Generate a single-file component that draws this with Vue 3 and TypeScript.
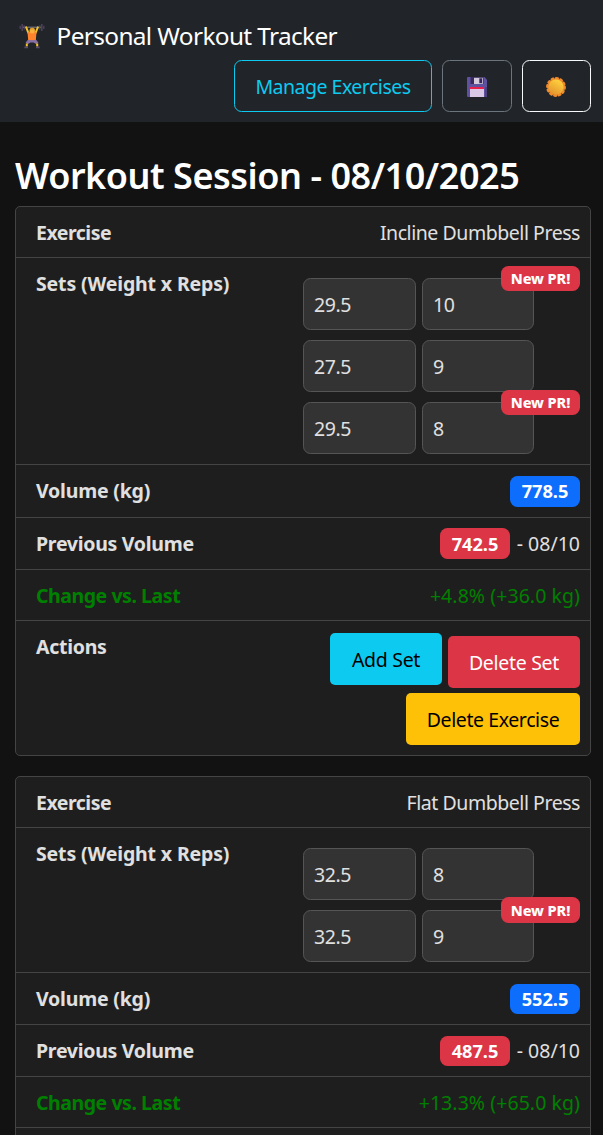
<script setup lang="ts">
interface WorkoutSet { weight: string; reps: string; pr: boolean }
interface Exercise {
  name: string
  kind: string
  sets: WorkoutSet[]
  volume: string
  previous: string
  date: string
  change: string
  editable: boolean
}

const exercises: Exercise[] = [
  {
    name: 'Incline Dumbbell Press',
    kind: 'incline',
    sets: [
      { weight: '29.5', reps: '10', pr: true },
      { weight: '27.5', reps: '9', pr: false },
      { weight: '29.5', reps: '8', pr: true },
    ],
    volume: '778.5',
    previous: '742.5',
    date: '08/10',
    change: '+4.8% (+36.0 kg)',
    editable: true,
  },
  {
    name: 'Flat Dumbbell Press',
    kind: 'flat',
    sets: [
      { weight: '32.5', reps: '8', pr: false },
      { weight: '32.5', reps: '9', pr: true },
    ],
    volume: '552.5',
    previous: '487.5',
    date: '08/10',
    change: '+13.3% (+65.0 kg)',
    editable: false,
  },
]
</script>

<template>
  <div class="page">
    <nav class="navbar">
      <div class="brand">
        <svg class="lifter" viewBox="0 0 26 26" aria-hidden="true">
          <path d="M4 4.2H22" stroke="#8a8792" stroke-width="1" />
          <path d="M1.2 2.8V6M24.8 2.8V6" stroke="#4b4058" stroke-width="1.4" />
          <path d="M3.2 1V8M22.8 1V8" stroke="#4b4058" stroke-width="1.6" />
          <path d="M5.2 2.2V6.8M20.8 2.2V6.8" stroke="#51465f" stroke-width="1.1" />
          <path d="M7.2 4.4L9.4 9.8M18.8 4.4L16.6 9.8" stroke="#f4c22b" stroke-width="2" stroke-linecap="round" />
          <path d="M8.6 9.6Q13 7 17.4 9.6L16.8 18H9.2Z" fill="#ff822d" />
          <circle cx="13.2" cy="7.8" r="2.7" fill="#f9b03c" />
          <path d="M10.6 7.4Q11 4.6 13.4 4.8Q15.8 4.8 15.8 7Q13 6 10.6 7.4Z" fill="#e39d25" />
          <path d="M8.8 17H17.2L19.4 19.6L17.4 21.2L14.6 19.6H11.4L8.6 21.2L6.6 19.6Z" fill="#8a70a0" />
          <path d="M7.8 20.4V23.6M18.2 20.4V23.6" stroke="#f4c22b" stroke-width="2" />
          <path d="M5.4 24.4H9M17 24.4H20.6" stroke="#5c4b70" stroke-width="1.7" />
        </svg>
        <span class="brand-name">Personal Workout Tracker</span>
      </div>
      <div class="nav-actions">
        <button class="btn outline-info"><span>Manage Exercises</span></button>
        <button class="btn outline-grey" aria-label="Save">
          <svg class="glyph" viewBox="0 0 20 20" aria-hidden="true">
            <path d="M1 0H17.5L20 2.7V19Q20 20 19 20H1Q0 20 0 19V1Q0 0 1 0Z" fill="#5e529f" />
            <path d="M18 10H20V20H18Z" fill="#50417f" />
            <path d="M3.5 0H16.5V7H3.5Z" fill="#3a2a5c" />
            <path d="M7 .8H15.8V7H7Z" fill="#d3c9dc" />
            <path d="M12.3 1.3H15V6.2H12.3Z" fill="#32245a" />
            <path d="M3 10H17V12H3Z" fill="#e9204b" />
            <path d="M3 12H17V20H3Z" fill="#d9c8e6" />
          </svg>
        </button>
        <button class="btn outline-light" aria-label="Theme">
          <svg class="glyph sun" viewBox="0 0 20 20" aria-hidden="true">
            <defs>
              <linearGradient id="sun" x1="0.8" y1="0.1" x2="0.3" y2="1">
                <stop offset="0" stop-color="#ffd13d" />
                <stop offset="1" stop-color="#e4952f" />
              </linearGradient>
            </defs>
            <circle cx="10" cy="10" r="8.5" fill="none" stroke="#f08b2c" stroke-width="2.8" stroke-linecap="round" stroke-dasharray="1.5 2.95" />
            <circle cx="10" cy="10" r="8.3" fill="#f08b2c" />
            <circle cx="10" cy="10" r="7.6" fill="url(#sun)" />
          </svg>
        </button>
      </div>
    </nav>

    <main>
      <h2>Workout Session - 08/10/2025</h2>
      <section v-for="ex in exercises" :key="ex.name" class="card" :class="ex.kind">
        <div class="row">
          <strong class="l-exercise">Exercise</strong>
          <span class="value name">{{ ex.name }}</span>
        </div>
        <div class="row sets-row">
          <strong class="l-sets">Sets (Weight x Reps)</strong>
          <div class="sets">
            <div v-for="(set, i) in ex.sets" :key="i" class="set">
              <input class="weight" type="text" :value="set.weight" />
              <input class="reps" type="text" :value="set.reps" />
              <span v-if="set.pr" class="pr">New PR!</span>
            </div>
          </div>
        </div>
        <div class="row volume-row">
          <strong class="l-volume">Volume (kg)</strong>
          <span class="badge blue">{{ ex.volume }}</span>
        </div>
        <div class="row previous-row">
          <strong class="l-previous">Previous Volume</strong>
          <div class="previous">
            <span class="badge red">{{ ex.previous }}</span>
            <span class="date">- {{ ex.date }}</span>
          </div>
        </div>
        <div class="row gain">
          <strong class="l-change">Change vs. Last</strong>
          <span class="value change">{{ ex.change }}</span>
        </div>
        <div class="row actions-row">
          <template v-if="ex.editable">
            <strong class="l-actions">Actions</strong>
            <div class="actions">
              <button class="btn info"><span>Add Set</span></button>
              <button class="btn danger"><span>Delete Set</span></button>
              <button class="btn warning"><span>Delete Exercise</span></button>
            </div>
          </template>
        </div>
      </section>
    </main>
  </div>
</template>

<style>
body { background: #121212; }
</style>

<style scoped>
* { box-sizing: border-box; }
.page {
  width: 603px;
  height: 1135px;
  overflow: hidden;
  background: #121212;
  color: #e0e0e0;
  font-family: "Noto Sans", "Open Sans", sans-serif;
  font-size: 19.5px;
  line-height: 30px;
}
.navbar { height: 122px; padding: 15px 12px 0 19px; background: #212529; }
.brand { display: flex; align-items: center; height: 45px; padding-bottom: 3px; color: #fff; }
.lifter { width: 26px; height: 26px; margin-right: 11.5px; fill: none; }
.brand-name { font-size: 24.4px; letter-spacing: -0.63px; white-space: nowrap; }
.nav-actions { display: flex; justify-content: flex-end; gap: 10px; }
.btn {
  display: flex;
  align-items: center;
  justify-content: center;
  height: 52px;
  padding: 2px 0 0;
  border: 1px solid transparent;
  border-radius: 7.5px;
  background: transparent;
  font: inherit;
  white-space: nowrap;
}
.outline-info { width: 198px; border-color: #0dcaf0; color: #0dcaf0; letter-spacing: -0.5px; }
.outline-grey { width: 70px; border-color: #6c757d; }
.outline-light { width: 69px; border-color: #f8f9fa; }
.glyph { width: 20px; height: 20px; }
.sun { margin-right: 1px; }
main { padding: 30px 12px 0 15px; }
h2 {
  height: 54px;
  margin: 0;
  color: #fff;
  font-size: 36px;
  font-weight: 600;
  line-height: 48px;
  letter-spacing: -0.46px;
  white-space: nowrap;
}
.card {
  margin-bottom: 20px;
  border: 1px solid #444;
  border-radius: 5px;
  background: #1e1e1e;
}
.row {
  display: flex;
  align-items: flex-start;
  justify-content: space-between;
  height: 51px;
  padding: 11px 10px 0 20px;
  border-bottom: 1px solid #444;
  white-space: nowrap;
}
strong { font-weight: 700; letter-spacing: -0.5px; }
.l-sets { letter-spacing: -0.15px; }
.l-volume { letter-spacing: -0.2px; }
.l-previous, .l-actions { letter-spacing: -0.28px; }
.l-change { letter-spacing: -0.45px; }
.name { letter-spacing: -0.45px; }
.change { letter-spacing: 0.07px; }
.date { letter-spacing: 0; }
.sets-row { height: auto; padding: 20px 10px 10px 20px; }
.sets-row strong { margin-top: -9px; }
.sets { display: flex; flex-direction: column; gap: 10px; width: 277px; }
.set { position: relative; display: flex; gap: 6px; }
input {
  height: 52px;
  padding: 0 10px;
  border: 1px solid #555;
  border-radius: 7.5px;
  outline: 0;
  background: #333;
  color: #e0e0e0;
  font: inherit;
  letter-spacing: -0.4px;
}
.weight { width: 113px; }
.reps { width: 112px; }
.pr {
  position: absolute;
  top: -12px;
  right: 0;
  width: 79px;
  height: 25px;
  border-radius: 7.5px;
  background: #dc3545;
  color: #fff;
  font-size: 14.6px;
  font-weight: 800;
  line-height: 25px;
  letter-spacing: -0.1px;
  text-align: center;
}
.flat .pr { top: -13px; height: 26px; line-height: 27px; }
.volume-row { height: 52px; }
.previous-row { height: 52px; padding-top: 10px; }
.previous-row strong { margin-top: 1px; }
.incline .volume-row { height: 53px; }
.badge {
  width: 70px;
  height: 31px;
  border-radius: 7.5px;
  color: #fff;
  font-size: 18.2px;
  font-weight: 700;
  line-height: 31px;
  text-align: center;
}
.flat .badge { height: 30px; }
.blue { background: #0d6efd; }
.red { background: #dc3545; }
.previous { display: flex; }
.incline .red { line-height: 32px; }
.date { width: 70px; padding-top: 1px; text-align: right; }
.flat .previous { padding-top: 1px; }
.flat .date { padding-top: 0; }
.flat .red { line-height: 30px; }
.gain { color: #008000; }
.actions-row { height: 134px; border-bottom: 0; }
.actions { display: flex; flex-wrap: wrap; justify-content: flex-end; align-items: flex-end; gap: 5px 6px; width: 260px; padding-top: 1px; }
.actions .btn { border-radius: 5px; letter-spacing: -0.3px; }
.actions .info { width: 112px; margin-bottom: 3px; background: #0dcaf0; color: #000; }
.actions .danger { width: 132px; background: #dc3545; color: #fff; }
.actions .warning { width: 174px; background: #ffc107; color: #000; letter-spacing: -0.4px; }
</style>
